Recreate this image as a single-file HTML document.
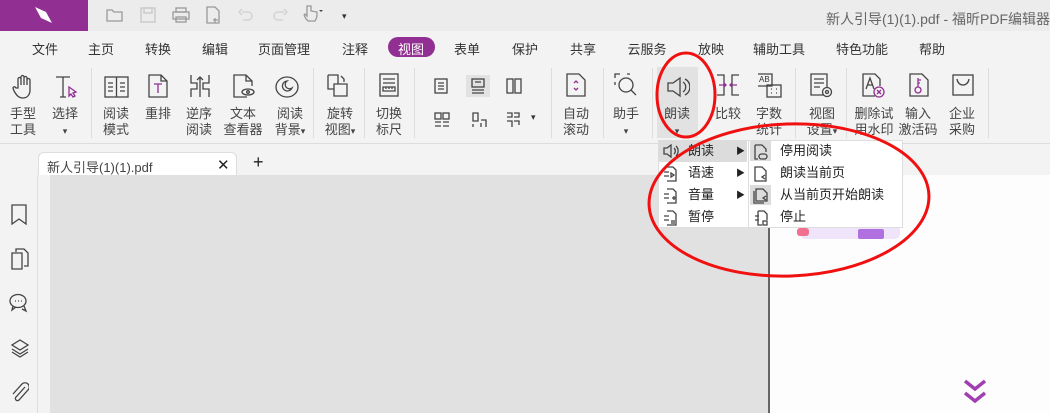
<!DOCTYPE html>
<html><head><meta charset="utf-8"><style>
*{margin:0;padding:0;box-sizing:border-box}
body{width:1050px;height:413px;overflow:hidden;position:relative;background:#f3f3f3;font-family:"Liberation Sans","Noto Sans CJK SC",sans-serif;font-size:13px;color:#333}
.a{position:absolute}
.t{position:absolute;white-space:nowrap;transform:translateX(-50%);text-align:center;line-height:16px;color:#444}
.m{position:absolute;top:39px;transform:translateX(-50%);white-space:nowrap;color:#333}
.dv{position:absolute;top:68px;width:1px;height:70px;background:#ddd}
svg{position:absolute;fill:none;stroke:#444;stroke-width:1.3}
.mi{position:absolute;height:22px;line-height:22px;white-space:nowrap;color:#222}
</style></head><body>
<div class="a" style="left:0;top:0;width:1050px;height:31px;background:#ececec"></div>
<div class="a" style="left:0;top:0;width:88px;height:31px;background:#922f92"></div>
<svg style="left:32px;top:4px;stroke:none" width="24" height="22" viewBox="0 0 24 22"><path d="M3 3 L14 8 L20 19 L9 14 Z" fill="#fff"/></svg>
<svg style="left:106px;top:7px;stroke:#999" width="18" height="16" viewBox="0 0 18 16"><path d="M1 3h5l2 2h8v9H1z"/></svg>
<svg style="left:140px;top:7px;stroke:#c8c8c8" width="16" height="16" viewBox="0 0 16 16"><rect x="1" y="1" width="14" height="14"/><rect x="4" y="1" width="8" height="5"/></svg>
<svg style="left:172px;top:7px;stroke:#999" width="18" height="16" viewBox="0 0 18 16"><rect x="1" y="5" width="16" height="7"/><rect x="4" y="1" width="10" height="4"/><rect x="4" y="10" width="10" height="5"/></svg>
<svg style="left:206px;top:6px;stroke:#999" width="14" height="18" viewBox="0 0 14 18"><path d="M1 1h8l4 4v12H1z M9 12v5M7 14h5"/></svg>
<svg style="left:238px;top:8px;stroke:#d0d0d0" width="16" height="14" viewBox="0 0 16 14"><path d="M4 4h6a4 4 0 010 8H5M4 1L1 4l3 3"/></svg>
<svg style="left:272px;top:8px;stroke:#d0d0d0" width="16" height="14" viewBox="0 0 16 14"><path d="M12 4H6a4 4 0 000 8h5M12 1l3 3-3 3"/></svg>
<svg style="left:302px;top:4px;stroke:#999" width="24" height="20" viewBox="0 0 24 20"><path d="M5 2v10l-2-2c-2 0 0 4 3 7h7c2-3 2-5 2-9l-6-1V2z"/><path d="M17 6l2 2 2-2" fill="#444" stroke="none"/></svg>
<div class="a" style="left:342px;top:11px;width:6px;height:9px;font-size:9px;color:#333">▾</div>
<div class="a" style="right:0;top:9px;font-size:14px;color:#666;white-space:nowrap">新人引导(1)(1).pdf - 福昕PDF编辑器</div>
<div class="a" style="left:388px;top:37px;width:47px;height:20px;border-radius:10px;background:#922f92"></div>
<div class="m" style="left:45px">文件</div><div class="m" style="left:101px">主页</div><div class="m" style="left:158px">转换</div><div class="m" style="left:215px">编辑</div><div class="m" style="left:284px">页面管理</div><div class="m" style="left:355px">注释</div><div class="m" style="left:411px;color:#fff">视图</div><div class="m" style="left:467px">表单</div><div class="m" style="left:525px">保护</div><div class="m" style="left:583px">共享</div><div class="m" style="left:647px">云服务</div><div class="m" style="left:711px">放映</div><div class="m" style="left:779px">辅助工具</div><div class="m" style="left:862px">特色功能</div><div class="m" style="left:932px">帮助</div>
<div class="a" style="left:657px;top:67px;width:41px;height:71px;background:#e2e2e2"></div>
<div class="dv" style="left:91px"></div><div class="dv" style="left:313px"></div><div class="dv" style="left:364px"></div><div class="dv" style="left:414px"></div><div class="dv" style="left:551px"></div><div class="dv" style="left:603px"></div><div class="dv" style="left:652px"></div><div class="dv" style="left:795px"></div><div class="dv" style="left:846px"></div><div class="dv" style="left:988px"></div>
<svg style="left:12px;top:74px" width="24" height="26" viewBox="0 0 24 26"><path d="M6 14V5a1.5 1.5 0 013 0v6V3a1.5 1.5 0 013 0v8V4a1.5 1.5 0 013 0v7V6a1.5 1.5 0 013 0v10c0 5-3 8-7 8s-6-2-9-7l-1-3c0-1 2-2 3 0z"/></svg>
<svg style="left:54px;top:75px" width="24" height="24" viewBox="0 0 24 24"><path d="M2 2h14M9 2v20M6 22h6"/><path d="M15 12l7 5-3 1 2 3-2 1-2-3-2 2z" stroke="#922f92"/></svg>
<svg style="left:104px;top:76px" width="25" height="22" viewBox="0 0 25 22"><rect x="1" y="1" width="23" height="20"/><path d="M12.5 1v20M4 7h5M4 11h5M4 15h5M16 7h5M16 11h5M16 15h5"/></svg>
<svg style="left:148px;top:74px" width="20" height="24" viewBox="0 0 20 24"><path d="M1 1h12l6 6v16H1z M13 1v6h6"/><path d="M6 10h8M10 10v9" stroke="#922f92"/></svg>
<svg style="left:190px;top:74px" width="20" height="24" viewBox="0 0 20 24"><path d="M1 1v8h6v6H1v8M19 1v8h-6v6h6v8M10 23V3M7 6l3-3 3 3"/></svg>
<svg style="left:233px;top:74px" width="22" height="24" viewBox="0 0 22 24"><path d="M14 23H1V1h12l6 6v5 M13 1v6h6"/><ellipse cx="15" cy="18" rx="6" ry="3"/><circle cx="15" cy="18" r="1.3"/></svg>
<svg style="left:275px;top:76px" width="24" height="22" viewBox="0 0 24 22"><ellipse cx="12" cy="11" rx="11" ry="10"/><path d="M12 5a5 5 0 105 7 4 4 0 01-5-7z"/></svg>
<svg style="left:327px;top:73px" width="22" height="24" viewBox="0 0 22 24"><path d="M1 2h10v9M11 11h9v12H7V11h4M1 2v14h6M14 3l3 3v3"/></svg>
<svg style="left:379px;top:73px" width="20" height="24" viewBox="0 0 20 24"><rect x="1" y="1" width="18" height="22"/><path d="M4 6h12M4 10h12M4 14h12v4H4zM7 14v2M10 14v2M13 14v2"/></svg>
<svg style="left:434px;top:78px" width="14" height="16" viewBox="0 0 14 16"><rect x="1" y="1" width="12" height="14"/><path d="M4 5h6M4 8h6M4 11h6"/></svg>
<div class="a" style="left:466px;top:75px;width:24px;height:22px;background:#e2e2e2"></div>
<svg style="left:471px;top:78px" width="14" height="16" viewBox="0 0 14 16"><rect x="1" y="1" width="12" height="8"/><path d="M1 12h12M1 15h12M4 4h6"/></svg>
<svg style="left:506px;top:78px" width="16" height="16" viewBox="0 0 16 16"><rect x="1" y="1" width="6" height="14"/><rect x="9" y="1" width="6" height="14"/></svg>
<svg style="left:434px;top:112px" width="16" height="16" viewBox="0 0 16 16"><rect x="1" y="1" width="6" height="6"/><rect x="9" y="1" width="6" height="6"/><path d="M1 10h6M9 10h6M1 14h6M9 14h6"/></svg>
<svg style="left:472px;top:112px" width="16" height="16" viewBox="0 0 16 16"><path d="M1 1h5v8H1zM1 12v3M9 8h5v7M9 11v4"/></svg>
<svg style="left:506px;top:112px" width="14" height="16" viewBox="0 0 14 16"><path d="M1 1h5v4H1M8 1h5v4H8M1 9h5v6M8 9h5v4"/></svg>
<div class="a" style="left:531px;top:112px;font-size:9px">▾</div>
<svg style="left:566px;top:73px" width="20" height="24" viewBox="0 0 20 24"><path d="M1 1h12l6 6v16H1z"/><path d="M8 10l2-2 2 2M8 15l2 2 2-2" stroke="#922f92"/></svg>
<svg style="left:614px;top:73px" width="24" height="24" viewBox="0 0 24 24"><path d="M1 5V1h5M1 9v3M13 1h3"/><circle cx="12" cy="12" r="7"/><path d="M17 17l5 5"/></svg>
<svg style="left:666px;top:76px" width="24" height="22" viewBox="0 0 24 22"><path d="M2 7h5l7-5v18l-7-5H2z M17 6a6 6 0 010 10M19 3a9 9 0 010 16"/></svg>
<svg style="left:716px;top:74px" width="24" height="22" viewBox="0 0 24 22"><path d="M1 1h7v20H1M23 1h-7v20h7"/><path d="M3 11h7M8 9l2 2-2 2M21 11h-7M16 9l-2 2 2 2" stroke="#922f92"/></svg>
<svg style="left:757px;top:73px" width="26" height="26" viewBox="0 0 26 26"><path d="M1 1h14v12H1"/><rect x="10" y="12" width="14" height="12"/><path d="M14 16h1M19 16h1M14 20h1M19 20h1"/></svg>
<div class="a" style="left:759px;top:76px;font-size:8px;line-height:8px;color:#333">AB</div>
<svg style="left:810px;top:73px" width="24" height="26" viewBox="0 0 24 26"><path d="M14 22H1V1h16v13M4 6h10M4 10h10M4 14h6"/><circle cx="17" cy="19" r="4.5"/><circle cx="17" cy="19" r="1.5"/></svg>
<svg style="left:862px;top:73px" width="24" height="26" viewBox="0 0 24 26"><path d="M13 23H1V1h12l5 5v7 M4 16L8 5l4 11M5 12h6"/><circle cx="17" cy="19" r="5" stroke="#922f92"/><path d="M15 17l4 4M19 17l-4 4" stroke="#922f92"/></svg>
<svg style="left:909px;top:73px" width="20" height="24" viewBox="0 0 20 24"><path d="M1 1h12l6 6v16H1z"/><circle cx="9" cy="17" r="3" stroke="#922f92"/><path d="M9 14V5M9 7h3M9 10h2" stroke="#922f92"/></svg>
<svg style="left:952px;top:74px" width="22" height="22" viewBox="0 0 22 22"><rect x="1" y="1" width="20" height="20"/><path d="M5 5c1 8 11 8 12 0"/></svg>
<div class="t" style="left:23px;top:106px">手型<br>工具</div>
<div class="t" style="left:65px;top:106px">选择<br><span style="font-size:9px">▾</span></div>
<div class="t" style="left:116px;top:106px">阅读<br>模式</div>
<div class="t" style="left:158px;top:106px">重排</div>
<div class="t" style="left:199px;top:106px">逆序<br>阅读</div>
<div class="t" style="left:243px;top:106px">文本<br>查看器</div>
<div class="t" style="left:290px;top:106px">阅读<br>背景<span style="font-size:9px">▾</span></div>
<div class="t" style="left:340px;top:106px">旋转<br>视图<span style="font-size:9px">▾</span></div>
<div class="t" style="left:389px;top:106px">切换<br>标尺</div>
<div class="t" style="left:576px;top:106px">自动<br>滚动</div>
<div class="t" style="left:626px;top:106px">助手<br><span style="font-size:9px">▾</span></div>
<div class="t" style="left:677px;top:106px">朗读<br><span style="font-size:9px">▾</span></div>
<div class="t" style="left:728px;top:106px">比较</div>
<div class="t" style="left:769px;top:106px">字数<br>统计</div>
<div class="t" style="left:822px;top:106px">视图<br>设置<span style="font-size:9px">▾</span></div>
<div class="t" style="left:874px;top:106px">删除试<br>用水印</div>
<div class="t" style="left:918px;top:106px">输入<br>激活码</div>
<div class="t" style="left:962px;top:106px">企业<br>采购</div>
<div class="a" style="left:0;top:143px;width:1050px;height:1px;background:#ddd"></div>
<div class="a" style="left:38px;top:152px;width:199px;height:24px;background:#fff;border-radius:6px 6px 0 0;border:1px solid #ddd;border-bottom:none"></div>
<div class="a" style="left:47px;top:157px;color:#444">新人引导(1)(1).pdf</div>
<div class="a" style="left:217px;top:156px;font-size:15px;color:#222">✕</div>
<div class="a" style="left:253px;top:152px;font-size:18px;line-height:20px;color:#222">+</div>
<div class="a" style="left:0;top:175px;width:1050px;height:238px;background:#f3f3f3"></div>
<div class="a" style="left:37px;top:175px;width:1px;height:238px;background:#ddd"></div>
<div class="a" style="left:50px;top:175px;width:718px;height:238px;background:#e1e1e1"></div>
<div class="a" style="left:768px;top:175px;width:2px;height:238px;background:#666"></div>
<div class="a" style="left:770px;top:175px;width:280px;height:238px;background:#fdfdfd"></div>
<svg style="left:11px;top:204px" width="16" height="22" viewBox="0 0 16 22"><path d="M1 1h14v19l-7-5-7 5z"/></svg>
<svg style="left:11px;top:248px" width="18" height="22" viewBox="0 0 18 22"><path d="M5 4V1h8l4 4v13h-4 M1 5h10v16H1z"/></svg>
<svg style="left:9px;top:293px" width="20" height="20" viewBox="0 0 20 20"><ellipse cx="9" cy="8" rx="8" ry="6.5"/><path d="M4 13l-1 4 4-3M15 13l2 5-4-2M6 8h1M9 8h1M12 8h1"/></svg>
<svg style="left:10px;top:338px" width="20" height="20" viewBox="0 0 20 20"><path d="M10 2l8 5-8 5-8-5zM2 11l8 5 8-5M2 14l8 5 8-5"/></svg>
<svg style="left:11px;top:381px" width="18" height="22" viewBox="0 0 18 22"><path d="M14 6l-9 10a2 2 0 003 3l9-10a4 4 0 00-6-6L2 13"/></svg>
<div class="a" style="left:800px;top:225px;width:100px;height:14px;background:#f0e4fb;border-radius:6px"></div>
<div class="a" style="left:797px;top:228px;width:12px;height:8px;background:#f07090;border-radius:3px"></div>
<div class="a" style="left:858px;top:229px;width:26px;height:10px;background:#b070e0;border-radius:2px"></div>
<svg style="left:962px;top:378px;stroke:#a040b0;stroke-width:3.5" width="26" height="28" viewBox="0 0 26 28"><path d="M3 3l10 8 10-8M3 15l10 8 10-8"/></svg>
<div class="a" style="left:658px;top:140px;width:91px;height:88px;background:#fff;border:1px solid #ddd"></div>
<div class="a" style="left:659px;top:140px;width:88px;height:22px;background:#dcdcdc"></div>
<div class="mi" style="left:688px;top:140px">朗读</div><div class="mi" style="left:688px;top:162px">语速</div><div class="mi" style="left:688px;top:184px">音量</div><div class="mi" style="left:688px;top:206px">暂停</div>
<div class="mi" style="left:736px;top:140px;font-size:9px">▶</div><div class="mi" style="left:736px;top:162px;font-size:9px">▶</div><div class="mi" style="left:736px;top:184px;font-size:9px">▶</div>
<svg style="left:663px;top:144px" width="16" height="14" viewBox="0 0 16 14"><path d="M1 4h3l4-3v12l-4-3H1zM11 4a4 4 0 010 6M13 2a7 7 0 010 10"/></svg>
<svg style="left:663px;top:166px" width="14" height="16" viewBox="0 0 14 16"><path d="M4 1h6l3 3v11H4M1 6h5M1 10h5M8 7l3 2-3 2z"/></svg>
<svg style="left:663px;top:188px" width="14" height="16" viewBox="0 0 14 16"><path d="M4 1h6l3 3v11H4M1 6h5M1 10h5M9 10h4M11 8v4"/></svg>
<svg style="left:663px;top:210px" width="14" height="16" viewBox="0 0 14 16"><path d="M4 1h6l3 3v11H4M1 6h5M1 10h5M9 10v4M11 10v4"/></svg>
<div class="a" style="left:748px;top:140px;width:155px;height:88px;background:#fff;border:1px solid #ddd"></div>
<div class="a" style="left:750px;top:141px;width:21px;height:20px;background:#dcdcdc"></div>
<div class="a" style="left:750px;top:185px;width:21px;height:20px;background:#dcdcdc"></div>
<div class="mi" style="left:780px;top:140px">停用阅读</div><div class="mi" style="left:780px;top:162px">朗读当前页</div><div class="mi" style="left:780px;top:184px">从当前页开始朗读</div><div class="mi" style="left:780px;top:206px">停止</div>
<svg style="left:754px;top:144px" width="14" height="16" viewBox="0 0 14 16"><path d="M1 1h7l4 4v3M1 1v14h3"/><rect x="5" y="10" width="8" height="5" rx="2.5"/></svg>
<svg style="left:754px;top:166px" width="14" height="16" viewBox="0 0 14 16"><path d="M1 1h7l4 4v10H1z M11 9l-3 2 3 2"/></svg>
<svg style="left:753px;top:188px" width="16" height="16" viewBox="0 0 16 16"><path d="M1 3v12h10M3 1h7l4 4v8H3z M13 8l-3 2 3 2"/></svg>
<svg style="left:754px;top:210px" width="14" height="16" viewBox="0 0 14 16"><path d="M4 1h6l3 3v6M4 1v14h4M1 6h4M1 10h4"/><rect x="9" y="11" width="4" height="4"/></svg>
<svg style="left:0;top:0;stroke:#f01010;stroke-width:3" width="1050" height="413" viewBox="0 0 1050 413"><ellipse cx="686" cy="95" rx="29" ry="42"/><ellipse cx="789" cy="200" rx="140" ry="76" transform="rotate(-2 789 200)"/></svg>
</body></html>
